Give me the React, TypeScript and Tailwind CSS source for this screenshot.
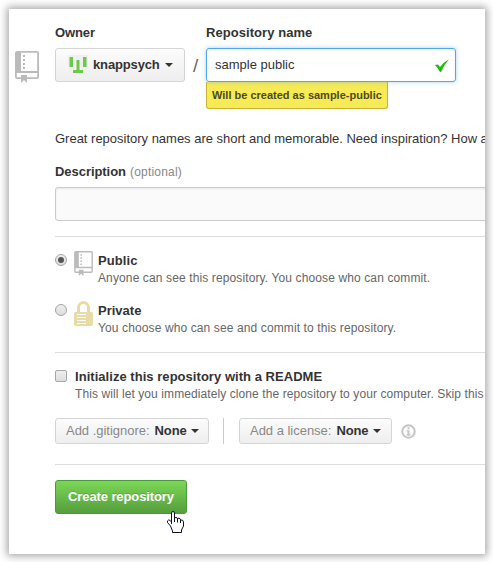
import React from "react";

function RepoIcon({ className }: { className: string }) {
  return (
    <svg className={className} viewBox="0 0 24 32" fill="#bbb">
      <path
        fillRule="evenodd"
        d="M2 0H22Q24 0 24 2V26Q24 28 22 28H12V32L9 29L6 32V28H2Q0 28 0 26V2Q0 0 2 0ZM6 1.800V20H22.200V1.800ZM1.800 22V26.200H6V24H12V26.200H22.200V22Z"
      />
      <path d="M8 4h2v2H8zM8 8h2v2H8zM8 12h2v2H8zM8 16h2v2H8z" />
    </svg>
  );
}

function LockIcon() {
  return (
    <svg className="h-[25px] w-[19px] shrink-0" viewBox="0 0 19 25" fill="#e9dba5">
      <path
        fillRule="evenodd"
        d="M3 11V6.5A6.5 6.5 0 0 1 16 6.5V11H17.5Q19 11 19 12.5V23Q19 25 17 25H2Q0 25 0 23V12.5Q0 11 1.500 11ZM6 11H13V6.500A3.500 3.500 0 0 0 6 6.500ZM3 13V14H12V13ZM3 16V17H12V16ZM3 19V20H12V19ZM3 22V23H12V22Z"
      />
    </svg>
  );
}

function Caret() {
  return (
    <svg className="h-[4px] w-[8px] shrink-0" viewBox="0 0 8 4" fill="#333">
      <path d="M0 0h8L4 4z" />
    </svg>
  );
}

function SelectButton({ label, className }: { label: string; className: string }) {
  return (
    <div
      className={`flex h-[26px] shrink-0 items-center rounded-[3px] border border-[#d5d5d5] bg-linear-to-b from-[#fcfcfc] to-[#eee] pl-[10px] ${className}`}
    >
      <span className="tracking-[-0.02px] text-[#888]">{label}</span>
      <b className="ml-[5px] tracking-[-0.1px]">None</b>
      <span className="ml-[4px] flex">
        <Caret />
      </span>
    </div>
  );
}

function Radio({ checked }: { checked?: boolean }) {
  return (
    <span className="mt-[3px] flex size-[12px] shrink-0 items-center justify-center rounded-full border border-[#a5a5a5] bg-linear-to-b from-[#eee] to-[#ddd]">
      {checked && <span className="size-[6px] rounded-full bg-[#555]" />}
    </span>
  );
}

export default function App() {
  return (
    <div className="h-[562px] w-[493px] overflow-hidden bg-white pt-[9px] pl-[9px] font-['Liberation_Sans',Arial,sans-serif] text-[13px] leading-[16px] whitespace-nowrap text-[#333]">
      <div className="h-[545px] w-[476px] bg-white shadow-[0_0_8px_2px_rgba(0,0,0,0.36)]">
        <div className="h-full overflow-hidden pl-[46px]">
          <div className="flex h-[39px] pt-[16px] font-bold">
            <span className="w-[151px] tracking-[-0.1px]">Owner</span>
            <span className="tracking-[0.06px]">Repository name</span>
          </div>

          <div className="-ml-[40px] flex h-[34px]">
            <RepoIcon className="mt-[3px] h-[32px] w-[24px] shrink-0" />
            <div className="ml-[16px] flex w-[130px] shrink-0 items-center rounded-[3px] border border-[#d5d5d5] bg-linear-to-b from-[#fcfcfc] to-[#eee] pl-[12px]">
              <svg className="size-[20px] shrink-0" viewBox="0 0 20 20">
                <path fill="#f0f0f0" d="M0 0h20v20H0z" />
                <path
                  fill="#70c84b"
                  d="M1.500 2H5v10H1.500zM15 2h3.500v10H15zM8.500 5h3v10H15v3H5v-3h3.500z"
                />
              </svg>
              <b className="ml-[5px] tracking-[-0.14px]">knappsych</b>
              <span className="ml-[5px] flex">
                <Caret />
              </span>
            </div>
            <span className="w-[21px] pt-[9px] pl-[8px] text-[19px] leading-[18px] text-[#666]">/</span>
            <div className="flex w-[250px] shrink-0 items-center justify-between rounded-[3px] border border-[#51a7e8] pr-[6px] pl-[8px] shadow-[inset_0_1px_2px_rgba(0,0,0,0.075),0_0_4px_rgba(81,167,232,0.5)]">
              <span>sample public</span>
              <svg className="h-[13px] w-[14px]" viewBox="0 0 14 13" fill="#1ebc0c">
                <path d="M0 6L3 5.500L5 8Q9 3 14 0Q9 6 6 13H5Q3 9 0 6Z" />
              </svg>
            </div>
          </div>

          <div className="ml-[151px] flex h-[27px] w-[182px] items-center rounded-b-[3px] border border-t-0 border-[#c8b336] bg-[#f7ea57] pl-[5px] text-[11px] font-bold text-[#4c4a1d]">
            Will be created as sample-public
          </div>

          <div className="mt-[22px] h-[16px] tracking-[-0.01px]">
            Great repository names are short and memorable. Need inspiration? How a
          </div>

          <div className="mt-[17px] h-[16px]">
            <b className="tracking-[-0.05px]">Description</b>
            <span className="ml-[4px] text-[12px] tracking-[0.2px] text-[#888]">(optional)</span>
          </div>
          <div className="mt-[7px] h-[34px] w-[500px] rounded-[3px] border border-[#ccc] bg-[#fafafa] shadow-[inset_0_1px_2px_rgba(0,0,0,0.075)]" />

          <div className="mt-[15px] h-px w-full bg-[#ddd]" />

          <div className="mt-[14px] flex h-[50px]">
            <Radio checked />
            <RepoIcon className="ml-[7px] h-[25px] w-[19px] shrink-0" />
            <div className="ml-[5px] pt-[2px]">
              <b className="block tracking-[0.1px]">Public</b>
              <span className="block pt-[1px] text-[12px] tracking-[0.12px] text-[#666]">
                Anyone can see this repository. You choose who can commit.
              </span>
            </div>
          </div>
          <div className="flex h-[50px]">
            <Radio />
            <span className="ml-[7px] shrink-0">
              <LockIcon />
            </span>
            <div className="ml-[5px] pt-[2px]">
              <b className="block">Private</b>
              <span className="block pt-[1px] text-[12px] tracking-[0.115px] text-[#666]">
                You choose who can see and commit to this repository.
              </span>
            </div>
          </div>

          <div className="mt-[1px] h-px w-full bg-[#ddd]" />

          <div className="mt-[15px] flex h-[50px]">
            <span className="mt-[2px] size-[12px] shrink-0 rounded-[2px] border border-[#a8a8a8] bg-linear-to-b from-[#eee] to-[#ddd]" />
            <div className="ml-[8px] pt-[1px]">
              <b className="block tracking-[0.04px]">Initialize this repository with a README</b>
              <span className="block pt-[1px] text-[12px] tracking-[0.09px] text-[#666]">
                This will let you immediately clone the repository to your computer. Skip this
              </span>
            </div>
          </div>

          <div className="flex items-center">
            <SelectButton label="Add .gitignore:" className="w-[154px]" />
            <span className="ml-[14px] h-[26px] w-px bg-[#ccc]" />
            <SelectButton label="Add a license:" className="ml-[15px] w-[153px]" />
            <svg className="ml-[9px] size-[15px]" viewBox="0 0 15 15" fill="#c4c4c4">
              <circle cx="7.500" cy="7.500" r="6.200" fill="none" stroke="#c4c4c4" strokeWidth="2" />
              <path d="M6.500 3.300h2v2h-2zM5.500 6.300h3v4h1v1.400h-4v-1.400h1V7.500h-1z" />
            </svg>
          </div>

          <div className="mt-[20px] h-px w-full bg-[#ddd]" />

          <div className="relative mt-[15px] flex h-[34px] w-[132px] items-center rounded-[3px] border border-[#4a993e] bg-linear-to-b from-[#7bd756] to-[#569e3d] pl-[12px] font-bold tracking-[-0.1px] text-white [text-shadow:0_-1px_0_rgba(0,0,0,0.15)]">
            Create repository
            <svg className="absolute top-[30px] left-[111px] h-[22px] w-[17px]" viewBox="0 0 17 22">
              <path
                d="M4.500 13V2Q4.500 .5 6 .5T7.500 2V7.500Q7.500 6.500 9 6.500T10.500 8Q10.500 7 12 7.200T13.500 9Q16.500 8.500 16.500 11V15L14.500 19V21.500H5.500V20L3.500 15L.5 11.500Q0 9.500 1.500 9T4.500 11Z"
                fill="#fff"
                stroke="#111126"
              />
              <path d="M7.500 7v4M10.500 8v3.500M13.500 9v3" stroke="#111126" fill="none" />
            </svg>
          </div>
        </div>
      </div>
    </div>
  );
}
